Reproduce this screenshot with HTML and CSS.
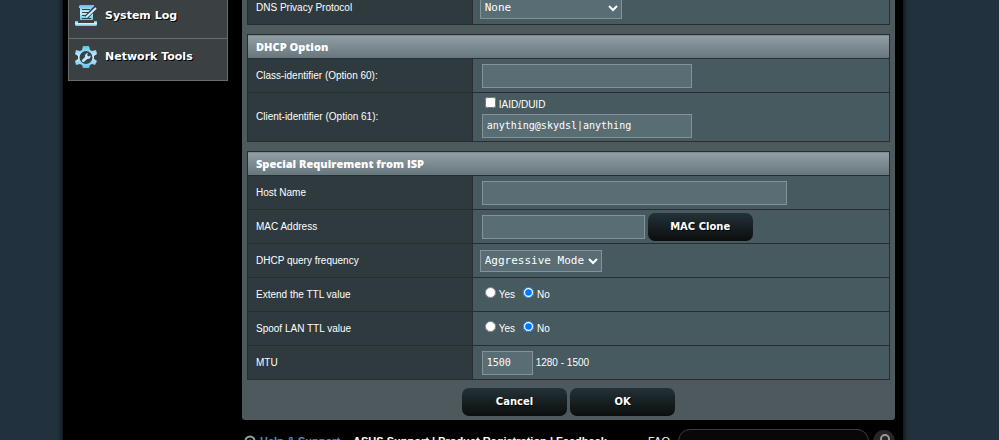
FILE: index.html
```html
<!DOCTYPE html>
<html lang="en">

<head>
    <meta charset="UTF-8" />
    <meta name="viewport" content="width=device-width, initial-scale=1.0" />
    <title>Internet Connection</title>
    <link rel="stylesheet" href="styles.css">
</head>

<body>
    <div class="page">
        <div class="content">
            <nav class="menu">
                <a href="#log">
                    <svg width="24" height="24" viewBox="0 0 24 24" aria-hidden="true">
                        <defs>
                            <linearGradient id="ice" x1="0" y1="0" x2="0" y2="1">
                                <stop offset="0" stop-color="#58c4ee" />
                                <stop offset=".5" stop-color="#d3effa" />
                                <stop offset="1" stop-color="#58c4ee" />
                            </linearGradient>
                        </defs>
                        <path fill="url(#ice)" fill-rule="evenodd" d="M6 1h14v2h-1v13H6V4H5V2zM8 5v1h8V5zM8 8v1h6V8zM8 11v1h4v-1zM8 14v1h9v-1z" />
                        <path fill="url(#ice)" d="M1 17h3v2h16v-2h3v4l-1 1H2l-1-1z" />
                        <path fill="none" stroke="#2c4049" stroke-width="4" d="M12 13.500L21 4" />
                        <path fill="none" stroke="#d3effa" stroke-width="2" d="M12 13.500L22 4" />
                    </svg>
                    System Log
                </a>
                <a href="#tools">
                    <svg width="24" height="24" viewBox="0 0 24 24" aria-hidden="true">
                        <path fill="url(#ice)" d="M9 1h6l1 4 2 1 4-1 1 4-3 2v3l3 2-2 4-3-1-2 1-1 3H9l-1-3-2-1-4 1-1-4 3-2v-3L1 9l1-4 4 1 2-1z" />
                        <circle cx="12" cy="12.500" r="6.500" fill="#34444c" />
                        <path fill="#bfe8f8" d="M8 15l3-3c-.6-2 1-4 3.200-3.600L13 10l1.400 1.600L16.500 10.500c.5 2.200-1.200 3.900-3.200 3.500l-3.200 2.800c-1.300.8-2.700-.6-2.100-1.800z" />
                    </svg>
                    Network Tools
                </a>
            </nav>

            <main class="panel">
                <form>
                    <table class="form-table">
                        <colgroup><col class="col-label"><col></colgroup>
                        <tbody>
                            <tr>
                                <th scope="row"><label for="dns">DNS Privacy Protocol</label></th>
                                <td><select class="select select-wide" id="dns"><option>None</option></select></td>
                            </tr>
                        </tbody>
                    </table>

                    <table class="form-table">
                        <colgroup><col class="col-label"><col></colgroup>
                        <thead>
                            <tr><th colspan="2">DHCP Option</th></tr>
                        </thead>
                        <tbody>
                            <tr>
                                <th scope="row"><label for="class-id">Class-identifier (Option 60):</label></th>
                                <td><input type="text" class="input input-25" id="class-id"></td>
                            </tr>
                            <tr class="tall">
                                <th scope="row"><label for="client-id">Client-identifier (Option 61):</label></th>
                                <td>
                                    <div class="stack">
                                        <label class="choice"><input type="checkbox"> IAID/DUID</label>
                                        <input type="text" class="input input-25" id="client-id" value="anything@skydsl|anything">
                                    </div>
                                </td>
                            </tr>
                        </tbody>
                    </table>

                    <table class="form-table">
                        <colgroup><col class="col-label"><col></colgroup>
                        <thead>
                            <tr><th colspan="2">Special Requirement from ISP</th></tr>
                        </thead>
                        <tbody>
                            <tr>
                                <th scope="row"><label for="host">Host Name</label></th>
                                <td><input type="text" class="input input-32" id="host"></td>
                            </tr>
                            <tr>
                                <th scope="row"><label for="mac">MAC Address</label></th>
                                <td>
                                    <div class="line">
                                        <input type="text" class="input input-20" id="mac">
                                        <button type="button" class="button">MAC Clone</button>
                                    </div>
                                </td>
                            </tr>
                            <tr>
                                <th scope="row"><label for="query">DHCP query frequency</label></th>
                                <td><select class="select" id="query"><option>Aggressive Mode</option></select></td>
                            </tr>
                            <tr>
                                <th scope="row">Extend the TTL value</th>
                                <td>
                                    <div class="line">
                                        <label class="choice"><input type="radio" name="ttl"> Yes</label>
                                        <label class="choice"><input type="radio" name="ttl" checked> No</label>
                                    </div>
                                </td>
                            </tr>
                            <tr>
                                <th scope="row">Spoof LAN TTL value</th>
                                <td>
                                    <div class="line">
                                        <label class="choice"><input type="radio" name="spoof"> Yes</label>
                                        <label class="choice"><input type="radio" name="spoof" checked> No</label>
                                    </div>
                                </td>
                            </tr>
                            <tr>
                                <th scope="row"><label for="mtu">MTU</label></th>
                                <td>
                                    <div class="line">
                                        <input type="text" class="input input-6" id="mtu" value="1500">
                                        <span>1280 - 1500</span>
                                    </div>
                                </td>
                            </tr>
                        </tbody>
                    </table>

                    <div class="actions">
                        <button type="button" class="button">Cancel</button>
                        <button type="submit" class="button">OK</button>
                    </div>
                </form>
            </main>
        </div>

        <footer class="footer">
            <svg width="12" height="12" viewBox="0 0 12 12" aria-hidden="true">
                <circle cx="6" cy="6" r="4.500" fill="none" stroke="#8fa3ab" stroke-width="2" />
                <circle cx="6" cy="6" r="1.500" fill="#8fa3ab" />
            </svg>
            <span class="help">Help &amp; Support</span>
            <span class="links">
                <a href="#support">ASUS Support</a> | <a href="#register">Product Registration</a> | <a href="#feedback">Feedback</a>
            </span>
            <label for="faq">FAQ</label>
            <input type="text" class="search" id="faq">
            <button type="button" class="search-button" aria-label="Search">
                <svg width="14" height="14" viewBox="0 0 14 14" aria-hidden="true">
                    <circle cx="8" cy="5" r="4" fill="none" stroke="#999" stroke-width="2" />
                    <path stroke="#999" stroke-width="2" d="M5 8l-4 4" />
                </svg>
            </button>
        </footer>
    </div>
</body>

</html>
```

FILE: styles.css
```css
:root {
    --bg: #21323e;
    --panel: #4d595d;
    --label: #2f3a3e;
    --cell: #475a5f;
    --line: #262e30;
    --field: #596d74;
    --field-border: #849397;
}

* {
    box-sizing: border-box;
}

body {
    margin: 0;
    height: 100vh;
    overflow: hidden;
    padding-right: 33px;
    background: var(--bg);
    color: #fff;
    font: 10px/14px "Liberation Sans", Arial, sans-serif;
}

.page {
    max-width: 840px;
    margin: -10px auto 0;
    padding: 0 8px 0 5px;
    background: #000;
    box-shadow: 0 0 6px #000;
}

.content {
    display: flex;
    align-items: flex-start;
    gap: 14px;
}

/* side menu */
.menu {
    width: 160px;
    flex: none;
    border: 1px solid #686d6f;
    border-top: 0;
    background: #3b4042;
}

.menu a {
    display: flex;
    align-items: center;
    gap: 7px;
    height: 42px;
    padding: 0 6px 6px 5px;
    color: #fff;
    font: bold 11px/14px "DejaVu Sans", Verdana, sans-serif;
    text-decoration: none;
    text-shadow: 1px 1px 0 #000;
}

.menu a:first-child {
    height: 48px;
    padding: 4px 6px 0 5px;
}

.menu a + a {
    border-top: 1px solid #686d6f;
}

/* form panel */
.panel {
    flex: 1;
    padding: 0 5px 4px;
    background: var(--panel);
    border-radius: 0 0 3px 3px;
}

.form-table {
    width: 100%;
    margin-bottom: 9px;
    border-collapse: collapse;
    table-layout: fixed;
}

.form-table:last-of-type {
    margin-bottom: 8px;
}

.col-label {
    width: 35%;
}

.form-table th,
.form-table td {
    height: 34px;
    padding: 0 7px;
    border: 1px solid var(--line);
    text-align: left;
    font-weight: normal;
}

.form-table th {
    padding-left: 8px;
    background: var(--label);
}

.form-table td {
    background: var(--cell);
}

.form-table .tall td {
    height: 49px;
}

.form-table thead th {
    height: 24px;
    background: linear-gradient(#92a0a5, #66757c);
    font: 800 11px/14px "Open Sans", "Arial Black", sans-serif;
}

.line {
    display: flex;
    align-items: center;
    gap: 3px;
}

.stack {
    display: flex;
    flex-direction: column;
    gap: 2px;
}

.input,
.select {
    border: 1px solid var(--field-border);
    border-radius: 0;
    background: var(--field);
    color: #fff;
    font-family: "DejaVu Sans Mono", "Lucida Console", monospace;
}

.input {
    display: block;
    height: 24px;
    margin-left: 2px;
    padding: 0 4px;
    font-size: 10px;
}

.input-6 {
    width: 51px;
}

.input-20 {
    width: 163px;
}

.input-25 {
    width: 210px;
}

.input-32 {
    width: 305px;
}

.select {
    display: block;
    height: 22px;
    padding: 0;
    font-size: 11px;
}

.select-wide {
    width: 142px;
}

.choice {
    display: flex;
    align-items: baseline;
    gap: 3px;
    margin-left: 5px;
}

.choice input {
    width: 11px;
    height: 11px;
    margin: 0;
}

.button {
    width: 105px;
    height: 28px;
    border: 0;
    border-radius: 7px;
    background: linear-gradient(#233238, #0c0d0d);
    color: #fff;
    font: bold 10px/14px "DejaVu Sans", Verdana, sans-serif;
    text-shadow: 1px 1px 0 #000;
}

.actions {
    display: flex;
    justify-content: center;
    gap: 3px;
}

/* footer */
.footer {
    display: flex;
    align-items: center;
    gap: 4px;
    padding: 9px 0 8px 176px;
    font-size: 11px;
}

.help {
    color: #4b93c4;
    font-weight: bold;
}

.links {
    flex: 1;
    margin-left: 9px;
    font-weight: bold;
    white-space: nowrap;
}

.links a {
    color: #fff;
    text-decoration: none;
}

.search {
    width: 191px;
    height: 24px;
    margin-left: 4px;
    border: 1px solid #3c3c3c;
    border-radius: 12px;
    background: #080808;
    color: #fff;
}

.search-button {
    display: flex;
    align-items: center;
    justify-content: center;
    width: 22px;
    height: 22px;
    padding: 0;
    border: 0;
    border-radius: 50%;
    background: #262626;
}
```
